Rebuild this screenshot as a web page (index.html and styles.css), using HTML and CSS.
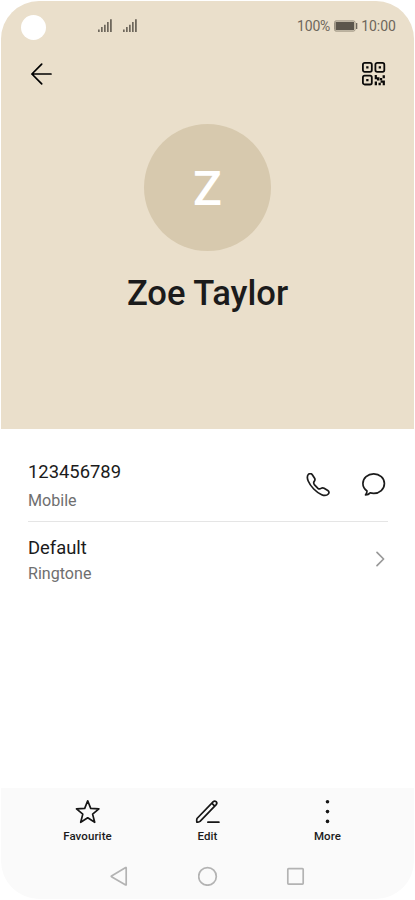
FILE: index.html
```html
<!DOCTYPE html>
<html lang="en">
<head>
<meta charset="utf-8">
<title>Zoe Taylor</title>
<link rel="stylesheet" href="styles.css">
</head>
<body>
<main class="phone">
  <section class="hero">
    <div class="status">
      <span class="camera"></span>
      <svg class="signals" width="40" height="14" viewBox="0 0 40 14" fill="#6e675c">
        <path d="M0 10.5h1.7v2.5H0zM3 8h1.7v5H3zM6 5.7h1.7V13H6zM9 3h1.7v10H9zM12 .3h1.8V13H12zM25 10.5h1.7v2.5H25zM28 8h1.7v5H28zM31 5.7h1.7V13H31zM34 3h1.7v10H34zM37 .3h1.8V13H37z"/>
      </svg>
      <span class="battery-level">100%</span>
      <svg class="battery" width="24" height="12" viewBox="0 0 24 12">
        <rect x=".5" y=".9" width="20.5" height="10.2" rx="1.5" fill="none" stroke="#99917f"/>
        <rect x="1.5" y="1.9" width="18.5" height="8.2" fill="#5c564c"/>
        <path d="M22 3h1.3v6H22z" fill="#6e675c"/>
      </svg>
      <span class="time">10:00</span>
    </div>
    <header class="header">
      <svg width="24" height="24" viewBox="0 0 24 24" fill="none" stroke="#000" stroke-width="1.7" stroke-linecap="round" stroke-linejoin="round"><path d="M12.7 2.2 2.9 12l9.8 9.8M2.9 12H22"/></svg>
      <svg width="24" height="24" viewBox="0 0 24 24" fill="none" stroke="#0b0a09" stroke-width="1.8">
        <rect x=".9" y=".9" width="8.9" height="8.9" rx="1.8"/><rect x="13.4" y=".9" width="8.9" height="8.9" rx="1.8"/><rect x=".9" y="13.6" width="8.9" height="8.9" rx="1.8"/>
        <path fill="#0b0a09" stroke="none" d="M4.2 4.2h2.3v2.3H4.2zM16.7 4.2H19v2.3h-2.3zM4.2 16.9h2.3v2.3H4.2zM12.7 13h2.2v2.3h2.6v3.2h-2.6v-1.3h-2.2zM20.6 13.2h2.3v3h-2.3zM18 16h2.2v2.3h-2.2zM12.7 19.5H15v3.8h-2.3zM16.5 20.8h2.3v2.5h-2.3zM18.6 18.6h4.3v4.7h-2.2v-2.6h-2.1z"/>
      </svg>
    </header>
    <div class="avatar">Z</div>
    <h1 class="name">Zoe Taylor</h1>
  </section>

  <section class="details">
    <div class="row row-phone">
      <div class="text">
        <div class="primary number">123456789</div>
        <div class="secondary">Mobile</div>
      </div>
      <div class="actions">
        <svg width="24" height="24" viewBox="0 0 24 24" fill="none" stroke="#1b1b1b" stroke-width="1.7" stroke-linejoin="round"><path d="M2.6 1.2C3.9.2 5.4.4 6.3 1.7L8.6 5.3C9.4 6.6 9 7.4 8.2 8.4 7.3 9.5 7.5 10.3 8.3 11.6L11.7 15.2C13 16.1 13.9 16.2 15 15.4 16.1 14.6 16.9 14.5 18.1 15.2L21.8 17.5C23.2 18.4 23.3 19.9 22.3 21 20.7 22.7 18.2 22.8 15.7 21.7 10.2 19.4 4.5 13.4 2.2 8 1.1 5.3.9 2.8 2.6 1.2z"/></svg>
        <svg width="24" height="24" viewBox="0 0 24 24" fill="none" stroke="#1b1b1b" stroke-width="1.7" stroke-linejoin="round"><path d="M11.7.9C17.6.9 22.4 5.1 22.4 10.6S17.6 20.3 11.7 20.3C10.5 20.3 9.3 20.2 8.2 19.8 7 21.1 5.3 21.8 3.5 22 4.4 20.8 5 19.4 5 18 2.5 16.2.9 13.6.9 10.6.9 5.1 5.8.9 11.7.9z"/></svg>
      </div>
    </div>
    <div class="row row-ringtone">
      <div class="text">
        <div class="primary">Default</div>
        <div class="secondary">Ringtone</div>
      </div>
      <svg class="chevron" width="10" height="16" viewBox="0 0 10 16" fill="none" stroke="#999" stroke-width="1.7" stroke-linecap="round" stroke-linejoin="round"><path d="m2 1.3 6.6 6.7L2 14.7"/></svg>
    </div>
  </section>

  <footer class="footer">
    <div class="tools">
      <div class="tool">
        <svg width="26" height="26" viewBox="0 0 26 26" fill="none" stroke="#161616" stroke-width="1.7" stroke-linejoin="round"><path d="m12.7 1.8 3 7.6 8.2.5-6.3 5.2 2.1 8.2-7-4.5-7 4.5 2.1-8.2-6.3-5.2 8.2-.5z"/></svg>
        <span>Favourite</span>
      </div>
      <div class="tool">
        <svg width="26" height="26" viewBox="0 0 26 26" fill="none" stroke="#161616" stroke-width="1.7" stroke-linecap="round" stroke-linejoin="round"><path d="M2 19.5 18.3 2.6q1.4-1.2 2.8.1t.1 2.9L5 22.4q-1.6 1-3.2.7-.4-1.8.2-3.6zM16.8 4.2l2.9 2.9"/><path d="M12.9 23.2h11"/></svg>
        <span>Edit</span>
      </div>
      <div class="tool">
        <svg width="26" height="26" viewBox="0 0 26 26" fill="#161616"><circle cx="12.5" cy="2.8" r="1.8"/><circle cx="12.5" cy="12.6" r="1.8"/><circle cx="12.5" cy="22.4" r="1.8"/></svg>
        <span>More</span>
      </div>
    </div>
    <nav class="nav">
      <svg width="20" height="20" viewBox="0 0 20 20" fill="none" stroke="#b3b3b3" stroke-width="1.7" stroke-linejoin="round"><path d="M16.2 1.9v16.8q0 .4-.5.2L1.5 10.7q-.6-.4 0-.8l14.2-8.3q.5-.2.5.3z"/></svg>
      <svg width="20" height="20" viewBox="0 0 20 20" fill="none" stroke="#b3b3b3" stroke-width="1.7"><circle cx="9.5" cy="10.4" r="8.8"/></svg>
      <svg width="20" height="20" viewBox="0 0 20 20" fill="none" stroke="#b3b3b3" stroke-width="1.7"><rect x="1.8" y="2.7" width="15.4" height="15.4" rx=".8"/></svg>
    </nav>
  </footer>
</main>
</body>
</html>
```
FILE: styles.css
```css
* { box-sizing: border-box; }

body {
  margin: 0;
  background: #fff;
  font-family: Roboto, "Liberation Sans", sans-serif;
  color: #1b1b1b;
}

svg { display: block; flex: none; }

.phone {
  display: flex;
  flex-direction: column;
  width: 413px;
  height: 898px;
  margin: 1px;
  border-radius: 38px;
  overflow: hidden;
  background: #fff;
}

.hero {
  display: flex;
  flex-direction: column;
  height: 428px;
  background: #eadfcb;
}

.status {
  display: flex;
  align-items: center;
  height: 50px;
  padding: 0 18px 0 20px;
  font-size: 14px;
  color: #6e675c;
}

.camera {
  width: 25px;
  height: 25px;
  margin-top: 3px;
  border-radius: 50%;
  background: #fff;
}

.signals { margin-left: 52px; }
.battery-level { margin-left: auto; letter-spacing: -0.2px; }
.battery { margin: 0 3px 0 4px; }

.header {
  display: flex;
  align-items: center;
  justify-content: space-between;
  height: 46px;
  padding: 0 28px;
}

.avatar {
  width: 127px;
  height: 127px;
  margin: 27.4px auto 0;
  border-radius: 50%;
  background: #d7c9ae;
  color: #fff;
  font-size: 48px;
  font-weight: 500;
  line-height: 130px;
  text-align: center;
}

.name {
  margin: 20.6px 0 0;
  font-size: 34.6px;
  font-weight: 500;
  line-height: 42px;
  text-align: center;
}

.details {
  flex: 1;
  padding: 0 26px 0 27px;
}

.row {
  display: flex;
  align-items: center;
  justify-content: space-between;
}

.row-phone {
  height: 93px;
  padding-top: 19px;
  border-bottom: 1px solid #e5e5e5;
}

.row-phone .text { padding-top: 4px; }
.row-phone .primary { line-height: 25px; }
.row-phone .secondary { padding-top: 4px; }

.row-ringtone { height: 76px; }
.row-ringtone .text { padding-top: 2px; }

.actions {
  display: flex;
  gap: 32px;
  padding-right: 2px;
}

.primary {
  font-size: 18.4px;
  line-height: 26px;
}

.secondary {
  font-size: 16.1px;
  line-height: 26px;
  color: #6f6f6f;
}

.chevron { margin: 0 3px 2px 0; }

.footer {
  height: 111px;
  background: #fafafa;
}

.tools {
  display: flex;
  justify-content: center;
  height: 66px;
  padding-top: 11px;
}

.tool {
  display: flex;
  flex-direction: column;
  align-items: center;
  width: 120px;
  font-size: 11.5px;
  font-weight: 500;
  line-height: 14px;
  letter-spacing: 0.1px;
  gap: 4px;
}

.nav {
  display: flex;
  justify-content: center;
  gap: 68px;
  padding-top: 12px;
}
```
